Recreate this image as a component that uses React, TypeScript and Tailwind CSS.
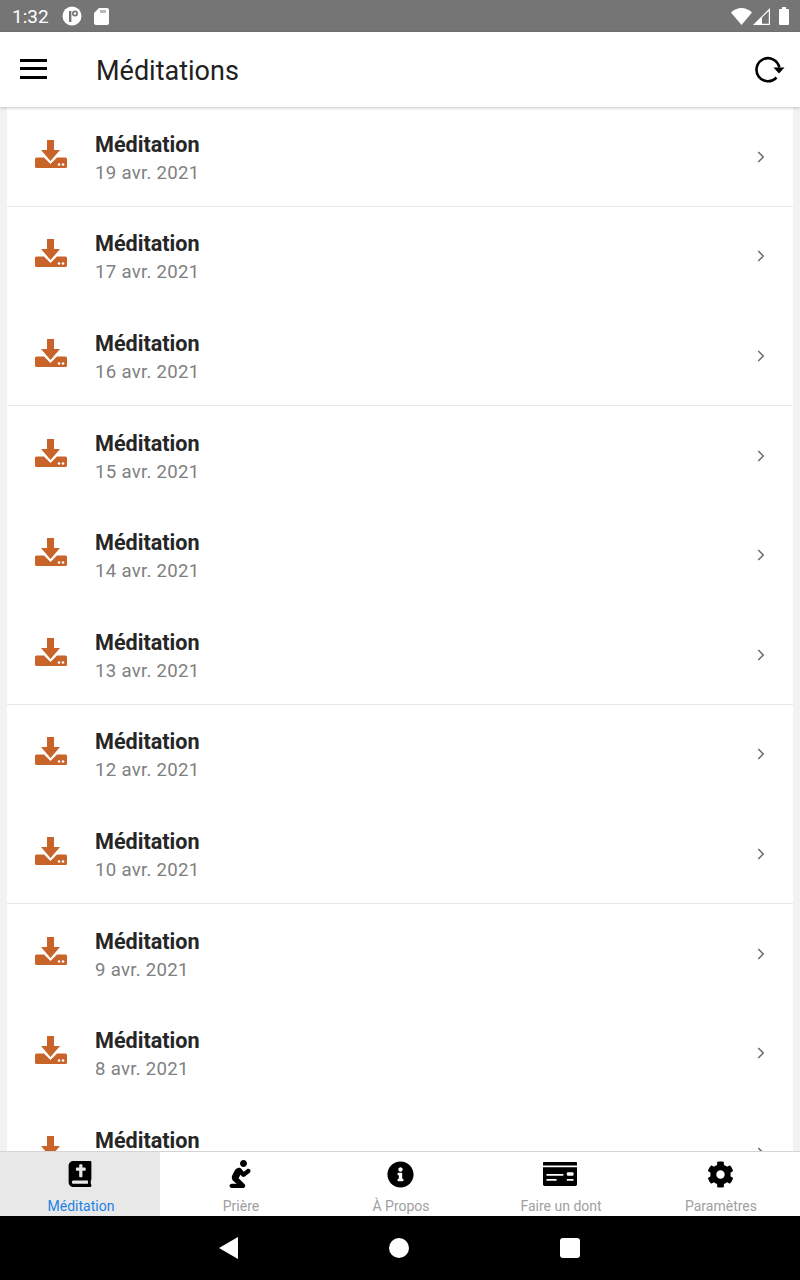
import { ChevronRight } from "lucide-react";
import { FaBible, FaCog, FaInfoCircle, FaMoneyCheck, FaPray } from "react-icons/fa";

const rows = [
  { date: "19 avr. 2021", line: true },
  { date: "17 avr. 2021", line: false },
  { date: "16 avr. 2021", line: true },
  { date: "15 avr. 2021", line: false },
  { date: "14 avr. 2021", line: false },
  { date: "13 avr. 2021", line: true },
  { date: "12 avr. 2021", line: false },
  { date: "10 avr. 2021", line: true },
  { date: "9 avr. 2021", line: false },
  { date: "8 avr. 2021", line: false },
  { date: "7 avr. 2021", line: false },
];

const tabs = [
  { label: "Méditation", icon: <FaBible size={26} />, active: true },
  { label: "Prière", icon: <FaPray size={28} />, active: false },
  { label: "À Propos", icon: <FaInfoCircle size={27} />, active: false },
  { label: "Faire un dont", icon: <FaMoneyCheck size={34} />, active: false },
  { label: "Paramètres", icon: <FaCog size={27} />, active: false },
];

function DownloadIcon() {
  return (
    <svg width="32" height="29" viewBox="0 0 32 29" fill="currentColor">
      <path d="M12 0h7v10h6L15.5 21 6 10h6z" />
      <path d="M1.5 17.500H9l6.500 6.500 6.500-6.500h8.500a1.500 1.500 0 0 1 1.500 1.500v7.500a1.500 1.500 0 0 1-1.500 1.500h-29A1.500 1.500 0 0 1 0 26.500V19a1.500 1.500 0 0 1 1.500-1.500z" />
      <circle cx="24" cy="24.500" r="1.300" fill="white" />
      <circle cx="28" cy="24.500" r="1.300" fill="white" />
    </svg>
  );
}

function StatusBar() {
  return (
    <div className="h-8 shrink-0 bg-[#757575] flex items-center justify-between pl-3 pr-[11px] text-white">
      <div className="flex items-center">
        <span className="text-[19px] leading-none">1:32</span>
        <svg width="20" height="20" viewBox="0 0 20 20" className="ml-[13px]">
          <circle cx="10" cy="10" r="9.500" fill="white" />
          <rect x="7" y="5" width="2.400" height="11" fill="#757575" />
          <circle cx="13" cy="7.500" r="3" fill="#757575" />
          <circle cx="13" cy="7.500" r="1.300" fill="white" />
        </svg>
        <svg width="15" height="17" viewBox="0 0 15 17" className="ml-[12px]">
          <path d="M5 0h8a2 2 0 0 1 2 2v13a2 2 0 0 1-2 2H2a2 2 0 0 1-2-2V5z" fill="white" />
          <path d="M7 2v3M9 2v3M11 2v3" stroke="#757575" strokeWidth="1" />
        </svg>
      </div>
      <div className="flex items-center">
        <svg width="21" height="17" viewBox="0 0 21 17">
          <path d="M0 4.500C6-1.500 15-1.500 21 4.500L10.500 17z" fill="white" />
        </svg>
        <svg width="17" height="17" viewBox="0 0 17 17" className="ml-[1px]">
          <path d="M0 17 17 0v17z" fill="white" />
          <path d="M9 9.500 15.800 3v12.800H9z" fill="#757575" />
        </svg>
        <svg width="10" height="18" viewBox="0 0 10 18" className="ml-[9px]">
          <path d="M3 0h4v2h2a1 1 0 0 1 1 1v14a1 1 0 0 1-1 1H1a1 1 0 0 1-1-1V3a1 1 0 0 1 1-1h2z" fill="white" />
        </svg>
      </div>
    </div>
  );
}

function Header() {
  return (
    <header className="relative z-10 h-[75px] shrink-0 bg-white flex items-center shadow-[0_1px_3px_rgba(0,0,0,0.22)]">
      <div className="ml-5 -mt-[2px] w-[27px] flex flex-col gap-[5.500px]">
        <div className="h-[3px] bg-black" />
        <div className="h-[3px] bg-black" />
        <div className="h-[3px] bg-black" />
      </div>
      <h1 className="ml-[49px] mt-[3px] text-[27px] font-normal leading-none text-[#212121]">Méditations</h1>
      <svg width="30" height="28" viewBox="0 0 30 28" className="ml-auto mr-[15px]">
        <path d="M21.500 21.500A11.500 11.500 0 1 1 24.300 11.500" fill="none" stroke="black" strokeWidth="2.600" />
        <path d="M18.500 11.500h11l-5.500 6z" fill="black" />
      </svg>
    </header>
  );
}

function Row({ date, line }: { date: string; line: boolean }) {
  return (
    <div
      className={
        line
          ? "h-[99.6px] shrink-0 bg-white flex items-center shadow-[inset_0_-1px_0_#e8e8e8]"
          : "h-[99.6px] shrink-0 bg-white flex items-center"
      }
    >
      <div className="ml-[28px] w-[32px] shrink-0 text-[#c8642a] -mt-[5px]">
        <DownloadIcon />
      </div>
      <div className="ml-[28px] flex-1 mt-[4px]">
        <div className="text-[21.6px] font-bold leading-[28px] text-[#262626]">Méditation</div>
        <div className="text-[18.6px] leading-[28px] tracking-[0.3px] text-[#808080]">{date}</div>
      </div>
      <ChevronRight size={18} strokeWidth={2.200} className="mr-[23px] text-[#6e6e6e]" />
    </div>
  );
}

function TabBar() {
  return (
    <nav className="h-[65px] shrink-0 bg-white border-t border-[#d4d4d4] flex">
      {tabs.map((tab) => (
        <div
          key={tab.label}
          className={
            tab.active
              ? "flex-1 bg-[#e8e8e8] flex flex-col items-center"
              : "flex-1 flex flex-col items-center"
          }
        >
          <div className="h-[45px] flex items-center justify-center text-black">{tab.icon}</div>
          <span
            className={
              tab.active
                ? "mt-[1px] text-[14px] leading-[19px] pl-[2px] text-[#1e82e6]"
                : "mt-[1px] text-[14px] leading-[19px] pl-[2px] text-[#a0a0a0]"
            }
          >
            {tab.label}
          </span>
        </div>
      ))}
    </nav>
  );
}

function NavBar() {
  return (
    <div className="h-16 shrink-0 bg-black flex items-center">
      <svg width="20" height="22" viewBox="0 0 20 22" className="ml-[219px]">
        <path d="M19 0v22L0 11z" fill="white" />
      </svg>
      <div className="ml-[150px] -mt-[1px] w-5 h-5 rounded-full bg-white" />
      <div className="ml-[151px] w-5 h-5 rounded-[3px] bg-white" />
    </div>
  );
}

export default function App() {
  return (
    <div className="w-[800px] h-[1280px] flex flex-col overflow-hidden bg-[#f2f2f2] font-['Roboto',sans-serif]">
      <StatusBar />
      <Header />
      <main className="flex-1 min-h-0 overflow-hidden px-[7px] flex flex-col">
        {rows.map((row) => (
          <Row key={row.date} date={row.date} line={row.line} />
        ))}
      </main>
      <TabBar />
      <NavBar />
    </div>
  );
}
